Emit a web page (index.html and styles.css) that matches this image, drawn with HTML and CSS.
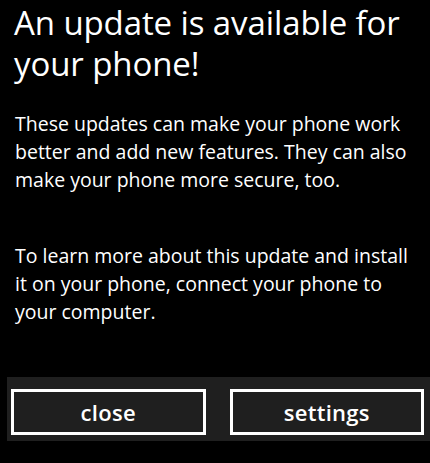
FILE: index.html
```html
<!DOCTYPE html>
<html>
<head>
<meta charset="utf-8">
<link rel="stylesheet" href="styles.css">
</head>
<body>
<div class="screen">
  <h1 class="title"><span class="line">An update is available for</span> <span class="line second-line">your phone!</span></h1>
  <p class="text first">These updates can make your phone work better and add new features. They can also make your phone more secure, too.</p>
  <p class="text second">To learn more about this update and install it on your phone, connect your phone to your computer.</p>
  <div class="bar">
    <button class="btn">close</button>
    <button class="btn">settings</button>
  </div>
</div>
</body>
</html>
```
FILE: styles.css
```css
html, body {
  margin: 0;
  padding: 0;
  background: #000;
}
.screen {
  width: 430px;
  height: 463px;
  background: #000;
  color: #fff;
  font-family: "Open Sans", "DejaVu Sans", sans-serif;
  overflow: hidden;
}
.title {
  margin: 0;
  padding: 6px 10px 0 14px;
  font-size: 33px;
  font-weight: 400;
  line-height: 34px;
  letter-spacing: -0.1px;
}
.line {
  display: block;
  white-space: nowrap;
}
.second-line {
  margin-top: 7px;
}
.text {
  margin: 0;
  padding: 0 12px 0 15px;
  font-size: 19.5px;
  line-height: 28px;
}
.first {
  margin-top: 29px;
}
.second {
  margin-top: 48px;
}
.bar {
  margin: 51px 0 0 7px;
  height: 64px;
  background: #1f1f1f;
  display: flex;
  align-items: center;
  gap: 24px;
  padding: 0 6px 0 4px;
}
.btn {
  flex: 1;
  height: 46px;
  margin-top: 6px;
  background: #1f1f1f;
  border: 3px solid #fff;
  color: #fff;
  font-family: "Open Sans", "DejaVu Sans", sans-serif;
  font-size: 22px;
  font-weight: 600;
  letter-spacing: 0.3px;
  padding: 0;
}
```
